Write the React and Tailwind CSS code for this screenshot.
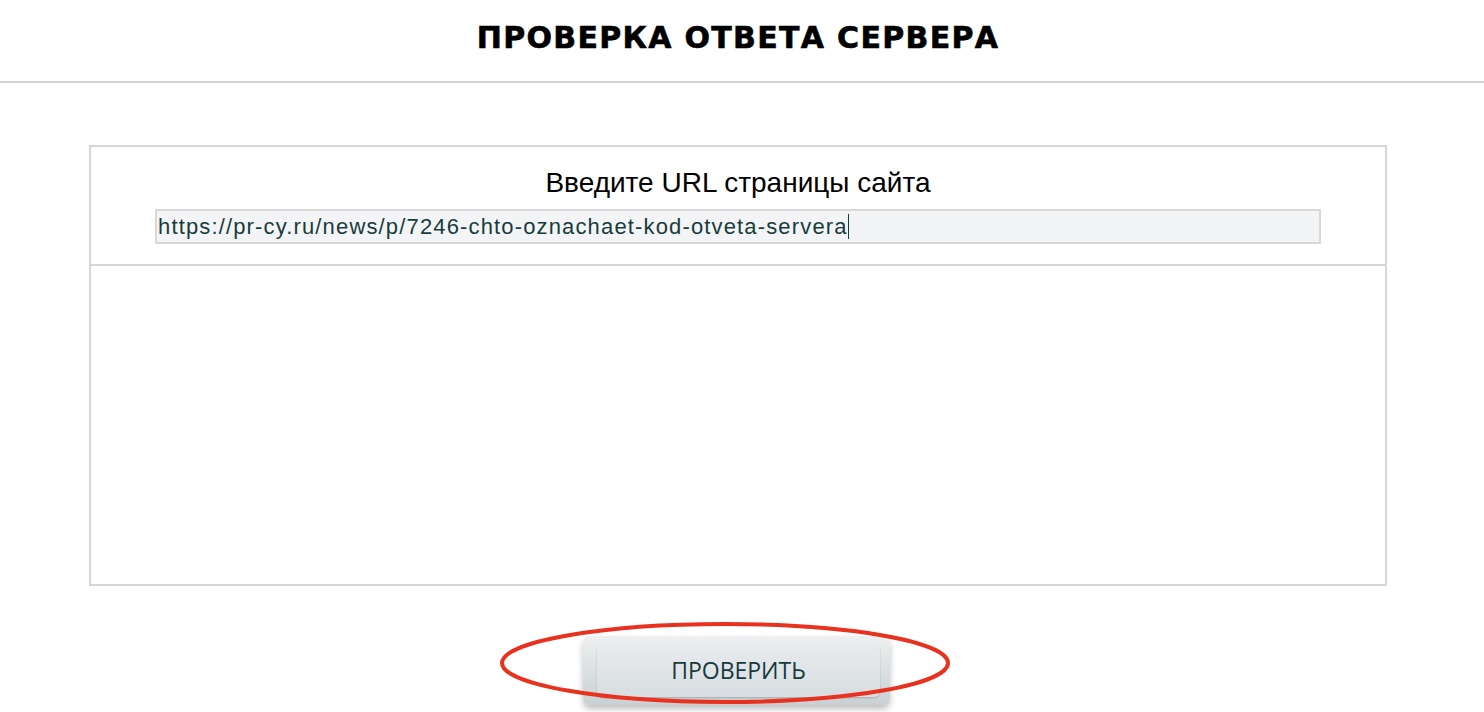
export default function App() {
    const url = "https://pr-cy.ru/news/p/7246-chto-oznachaet-kod-otveta-servera";

    return (
        <div className="min-h-[712px] bg-white font-['Liberation_Sans',Arial,sans-serif]">
            <header className="h-[83px] flex items-center justify-center border-b-2 border-[#d2d2d2]">
                <h1 className="text-[30px] font-bold tracking-[1.3px] text-black font-['DejaVu_Sans',Verdana,sans-serif] mt-[-7px] mr-[8px] [-webkit-text-stroke:0.6px_black]">
                    ПРОВЕРКА ОТВЕТА СЕРВЕРА
                </h1>
            </header>

            <div className="pl-[89px] pr-[97px] pt-[62px]">
                <div className="border-2 border-[#d6d6d6] h-[441px] flex flex-col">
                    <div className="h-[119px] border-b-2 border-[#d6d6d6] flex flex-col items-center pt-[20px]">
                        <label className="text-[28px] leading-[32px] text-black">Введите URL страницы сайта</label>
                        <div className="mt-[10px] w-[1166px] h-[35px] bg-[#f3f4f5] border-2 border-[#d8d8d8] flex items-center px-[1px]">
                            <span className="text-[22px] tracking-[1.15px] text-[#183c3c]">{url}</span>
                            <span className="w-[1.5px] h-[25px] bg-[#183c3c]"></span>
                        </div>
                    </div>
                    <div className="flex-1"></div>
                </div>
            </div>

            <div className="flex justify-center pt-[50px] pr-[11px]">
                <div className="relative">
                    <button className="w-[307px] h-[69px] rounded-[7px] bg-gradient-to-b from-[#eef0f1] to-[#c9d0d3] shadow-[0_4px_6px_rgba(0,0,0,0.25)] pl-[14px] pr-[10px] pt-[7px] pb-[8px] flex">
                        <span className="flex-1 rounded-[6px] bg-gradient-to-b from-[#e9ecee] to-[#d7dde0] shadow-[0_1px_2px_rgba(0,0,0,0.2)] flex items-center justify-center text-[23px] text-[#173a3d] font-['Open_Sans',Arial,sans-serif]">
                            ПРОВЕРИТЬ
                        </span>
                    </button>
                    <svg className="absolute left-[-84px] top-[-15px] pointer-events-none" width="452" height="84" viewBox="0 0 452 84">
                        <ellipse cx="226" cy="42" rx="223" ry="39" fill="none" stroke="#e8321f" strokeWidth="4" />
                    </svg>
                </div>
            </div>
        </div>
    );
}
